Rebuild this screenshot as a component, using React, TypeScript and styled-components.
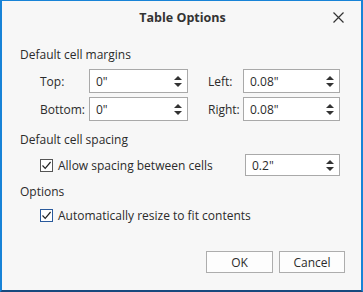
import React from "react";
import styled, { createGlobalStyle } from "styled-components";

const GlobalStyle = createGlobalStyle`
  html, body {
    margin: 0;
    padding: 0;
    background: #f7f7f7;
  }
  body {
    font-family: "Open Sans", "Noto Sans", sans-serif;
    font-size: 12px;
    color: #2b2b2b;
  }
`;

export default function App() {
  return (
    <>
      <GlobalStyle />
      <Dialog>
        <TitleBar>
          <span />
          <Title>Table Options</Title>
          <CloseButton aria-label="Close">
            <svg width="11" height="11" viewBox="0 0 11 11">
              <path d="M0.5 0.5 L10.5 10.5 M10.5 0.5 L0.5 10.5" stroke="#333" strokeWidth="1.2" fill="none" />
            </svg>
          </CloseButton>
        </TitleBar>
        <Body>
          <Heading>Default cell margins</Heading>
          <MarginsGrid>
            <FieldLabel>Top:</FieldLabel>
            <Spin value={'0"'} />
            <FieldLabel>Left:</FieldLabel>
            <Spin value={'0.08"'} />
            <FieldLabel>Bottom:</FieldLabel>
            <Spin value={'0"'} />
            <FieldLabel>Right:</FieldLabel>
            <Spin value={'0.08"'} />
          </MarginsGrid>
          <Heading $top={11}>Default cell spacing</Heading>
          <CheckRow $top={6}>
            <CheckItem>
              <Check />
              <span>Allow spacing between cells</span>
            </CheckItem>
            <Spin value={'0.2"'} $height={22} />
          </CheckRow>
          <Heading $top={8}>Options</Heading>
          <CheckRow $top={7}>
            <CheckItem>
              <Check $focused />
              <span>Automatically resize to fit contents</span>
            </CheckItem>
          </CheckRow>
        </Body>
        <Footer>
          <DialogButton $width={67}>OK</DialogButton>
          <DialogButton $width={66}>Cancel</DialogButton>
        </Footer>
      </Dialog>
    </>
  );
}

const Spin = ({ value, $height = 24 }: { value: string; $height?: number }) => (
  <SpinBox $height={$height}>
    <SpinValue>{value}</SpinValue>
    <svg width="8" height="11" viewBox="0 0 8 11">
      <path d="M4 0 L8 4 L0 4 Z M0 7 L8 7 L4 11 Z" fill="#333" />
    </svg>
  </SpinBox>
);

const Check = ({ $focused }: { $focused?: boolean }) => (
  <CheckBox $focused={$focused}>
    <svg width="11" height="11" viewBox="0 0 11 11">
      <path d="M1.5 5.5 L4.2 8.3 L9.6 2" stroke="#222" strokeWidth="1.2" fill="none" />
    </svg>
  </CheckBox>
);

const Dialog = styled.div`
  width: 363px;
  height: 292px;
  box-sizing: border-box;
  border-top: 1px solid #1883d7;
  border-left: 2px solid #1883d7;
  border-right: 2px solid #1883d7;
  border-bottom: 2px solid #17497e;
  background: #f7f7f7;
  display: flex;
  flex-direction: column;
`;

const TitleBar = styled.div`
  height: 33px;
  display: grid;
  grid-template-columns: 1fr auto 1fr;
  align-items: center;
`;

const Title = styled.div`
  font-weight: 700;
  font-size: 12.5px;
  color: #333;
  padding-left: 2px;
`;

const CloseButton = styled.div`
  justify-self: end;
  width: 30px;
  height: 30px;
  margin-right: 8px;
  display: flex;
  align-items: center;
  justify-content: center;
`;

const Body = styled.div`
  padding: 0 18px;
`;

const Heading = styled.div<{ $top?: number }>`
  margin-top: ${(p) => p.$top ?? 13}px;
  line-height: 16px;
`;

const MarginsGrid = styled.div`
  margin-top: 6px;
  padding-left: 20px;
  display: grid;
  grid-template-columns: 49px 99px 20px 35px 97px;
  row-gap: 4px;
  align-items: center;

  & > :nth-child(4n + 3) {
    grid-column: 4;
  }
`;

const FieldLabel = styled.div``;

const SpinBox = styled.div<{ $height: number }>`
  height: ${(p) => p.$height}px;
  box-sizing: border-box;
  border: 1px solid #a9a9a9;
  background: #fff;
  display: flex;
  align-items: center;
  padding: 0 5px 0 6px;
`;

const SpinValue = styled.span`
  flex: 1;
`;

const CheckRow = styled.div<{ $top: number }>`
  margin-top: ${(p) => p.$top}px;
  padding-left: 20px;
  display: grid;
  grid-template-columns: 205px 95px;
  align-items: center;
  white-space: nowrap;
`;

const CheckItem = styled.label`
  display: flex;
  align-items: center;
  gap: 5px;
`;

const CheckBox = styled.span<{ $focused?: boolean }>`
  flex: none;
  width: 13px;
  height: 13px;
  box-sizing: border-box;
  border: 1px solid ${(p) => (p.$focused ? "#2a5a9c" : "#555")};
  background: #fff;
  display: flex;
  align-items: center;
  justify-content: center;
`;

const Footer = styled.div`
  margin-top: auto;
  margin-bottom: 17px;
  padding-right: 16px;
  display: flex;
  justify-content: flex-end;
  gap: 6px;
`;

const DialogButton = styled.div<{ $width: number }>`
  width: ${(p) => p.$width}px;
  height: 22px;
  box-sizing: border-box;
  border: 1px solid #adadad;
  background: #fdfdfd;
  display: flex;
  align-items: center;
  justify-content: center;
`;
